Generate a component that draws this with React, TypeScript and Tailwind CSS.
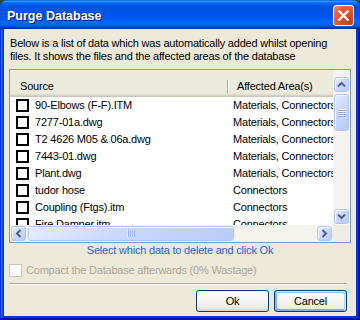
import React from "react";

const rows: [string, string][] = [
  ["90-Elbows (F-F).ITM", "Materials, Connectors"],
  ["7277-01a.dwg", "Materials, Connectors"],
  ["T2 4626 M05 & 06a.dwg", "Materials, Connectors"],
  ["7443-01.dwg", "Materials, Connectors"],
  ["Plant.dwg", "Materials, Connectors"],
  ["tudor hose", "Connectors"],
  ["Coupling (Ftgs).itm", "Connectors"],
  ["Fire Damper.itm", "Connectors"],
];

type Dir = "up" | "down" | "left" | "right";

function Arrow({ dir }: { dir: Dir }) {
  const paths: Record<Dir, string> = {
    up: "M1 6.5 L4.5 3 L8 6.5",
    down: "M1 2.5 L4.5 6 L8 2.5",
    left: "M6.5 1 L3 4.5 L6.5 8",
    right: "M2.5 1 L6 4.5 L2.5 8",
  };
  return (
    <svg width="9" height="9" viewBox="0 0 9 9">
      <path d={paths[dir]} fill="none" stroke="#4D6185" strokeWidth="2" />
    </svg>
  );
}

const sbtn =
  "w-full h-full rounded-[3px] border border-[#B1C5F3] bg-[linear-gradient(135deg,#E3EBFE_0%,#CAD8FC_45%,#B9CCF7_100%)] shadow-[inset_1px_1px_0_#F2F6FF] flex items-center justify-center";

function ScrollBtn({ dir }: { dir: Dir }) {
  return (
    <div className="w-[17px] h-[17px] p-[1px] shrink-0">
      <div className={sbtn}>
        <Arrow dir={dir} />
      </div>
    </div>
  );
}

function GripV() {
  return (
    <div className="flex flex-col">
      {[0, 1, 2, 3].map((i) => (
        <div key={i} className="w-[7px] h-[2px] border-t border-t-[#EEF4FE] border-b border-b-[#8FAFEF]" />
      ))}
    </div>
  );
}

function GripH() {
  return (
    <div className="flex flex-row">
      {[0, 1, 2, 3].map((i) => (
        <div key={i} className="h-[7px] w-[2px] border-l border-l-[#EEF4FE] border-r border-r-[#8FAFEF]" />
      ))}
    </div>
  );
}

const xpBtn =
  "w-[73px] h-[22px] rounded-[3px] border border-[#003C74] bg-[linear-gradient(180deg,#ffffff_0%,#ecebe6_86%,#d6d0c5_100%)] text-black";

export default function App() {
  return (
    <div className="w-[360px] h-[320px] bg-[#2c4a2e] font-['Liberation_Sans',Arial,sans-serif] text-[11px] tracking-[-0.2px] leading-[13px] text-black">
      <div className="w-[360px] h-[320px] rounded-t-[8px] overflow-hidden bg-[#0831D9] flex flex-col shadow-[inset_-1px_-1px_#00138c,inset_1px_1px_#0831d9,inset_-2px_-2px_#001ea0,inset_2px_2px_#166aee,inset_-3px_-3px_#003bda,inset_3px_3px_#0855dd]">
        {/* Title bar */}
        <div className="h-[29px] shrink-0 flex items-center justify-between pl-[7px] pr-[6px] bg-[linear-gradient(180deg,#0058ee_0%,#3593ff_4%,#288eff_6%,#127dff_8%,#036ffc_10%,#0262ee_14%,#0057e5_20%,#0054e3_24%,#0055eb_56%,#005bf5_66%,#026afe_76%,#0062ef_86%,#0052d6_92%,#0040ab_94%,#003092_100%)]">
          <span className="pt-[3px] text-white font-bold text-[12.5px] tracking-normal leading-[15px] [text-shadow:1px_1px_0_#0F1089]">
            Purge Database
          </span>
          <div className="mt-[2px] w-[21px] h-[21px] rounded-[3px] border border-white bg-[radial-gradient(circle_at_85%_85%,#c2401a_0%,#d9552a_50%,#e0683f_75%,#eea083_100%)] flex items-center justify-center">
            <svg width="19" height="19" viewBox="0 0 19 19">
              <path d="M4.5 4.5 L14.5 14.5 M14.5 4.5 L4.5 14.5" stroke="#ffffff" strokeWidth="2.4" />
            </svg>
          </div>
        </div>

        {/* Client */}
        <div className="flex-1 mx-[4px] mb-[4px] bg-[#ECE9D8] px-[5px] pt-[8px] pb-[4px] flex flex-col">
          <p className="pl-[1px] h-[26px]">
            Below is a list of data which was automatically added whilst opening
            <br />
            files. It shows the files and the affected areas of the database
          </p>

          {/* List view */}
          <div className="mt-[6px] h-[174px] border border-[#7F9DB9] bg-white flex flex-col">
            <div className="flex h-[155px]">
              <div className="w-[323px] flex flex-col overflow-hidden">
                {/* Header */}
                <div className="h-[27px] shrink-0 flex items-start pt-[10px] bg-[#EBEADB] shadow-[inset_0_-1px_0_#CBC7B8,inset_0_-2px_0_#D6D2C2,inset_0_-3px_0_#E2DECD]">
                  <div className="w-[217px] shrink-0 pl-[10px]">Source</div>
                  <div className="w-[2px] h-[13px] shrink-0 border-l border-l-[#ACA899] border-r border-r-white" />
                  <div className="pl-[8px] whitespace-nowrap">Affected Area(s)</div>
                </div>
                {/* Rows */}
                {rows.map(([src, area]) => (
                  <div key={src} className="h-[17px] shrink-0 flex items-center">
                    <div className="w-[217px] shrink-0 flex items-center pl-[6px] gap-[6px]">
                      <div className="w-[13px] h-[13px] border-2 border-black bg-white shrink-0" />
                      <span className="whitespace-nowrap">{src}</span>
                    </div>
                    <div className="pl-[6px] whitespace-nowrap">{area}</div>
                  </div>
                ))}
              </div>
              {/* Vertical scrollbar */}
              <div className="w-[17px] shrink-0 flex flex-col bg-[#F4F3EE]">
                <div className="h-[6px] shrink-0" />
                <ScrollBtn dir="up" />
                <div className="w-[17px] h-[39px] p-[1px] shrink-0">
                  <div className={sbtn}>
                    <GripV />
                  </div>
                </div>
                <div className="flex-1" />
                <ScrollBtn dir="down" />
              </div>
            </div>
            <div className="flex h-[17px]">
              {/* Horizontal scrollbar */}
              <div className="w-[323px] shrink-0 flex flex-row bg-[#F4F3EE]">
                <ScrollBtn dir="left" />
                <div className="w-[208px] h-[17px] p-[1px] shrink-0">
                  <div className={sbtn}>
                    <GripH />
                  </div>
                </div>
                <div className="flex-1" />
                <ScrollBtn dir="right" />
              </div>
              <div className="w-[17px] shrink-0 bg-[#EEEDE5]" />
            </div>
          </div>

          <div className="mt-[1px] text-center text-[#2B62D3]">
            Select which data to delete and click Ok
          </div>

          <div className="mt-[7px] h-[13px] flex items-center gap-[4px]">
            <div className="w-[13px] h-[13px] border border-[#CAC8BB] bg-white shrink-0" />
            <span className="text-[#ACA899] whitespace-nowrap">
              Compact the Database afterwards (0% Wastage)
            </span>
          </div>

          <div className="mt-[6px] mr-[4px] h-[2px] border-t border-t-[#ACA899] border-b border-b-white" />

          <div className="mt-[5px] mr-[4px] flex justify-end gap-[5px]">
            <button className={xpBtn}>Ok</button>
            <button className={`${xpBtn} shadow-[inset_-1px_1px_#cee7ff,inset_1px_2px_#98b8ea,inset_-2px_2px_#bcd4f6,inset_1px_-1px_#89ade4,inset_2px_-2px_#89ade4]`}>
              Cancel
            </button>
          </div>
        </div>
      </div>
    </div>
  );
}
